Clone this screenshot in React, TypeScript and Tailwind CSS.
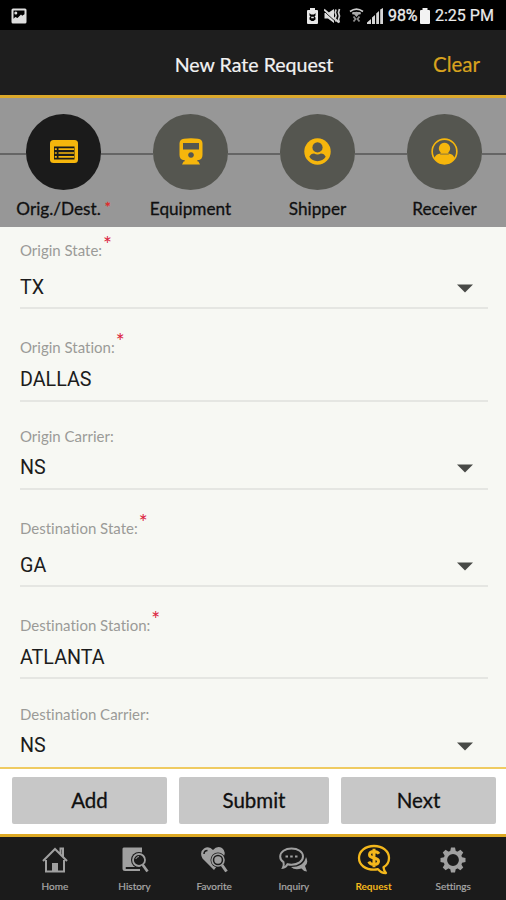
import React from "react";

const LATO = "font-['Lato','Noto_Sans',sans-serif] [font-variant-ligatures:none]";
const ROBOTO = "font-['Roboto','Noto_Sans',sans-serif]";

function StatusBar() {
  return (
    <div className={`flex h-[30px] shrink-0 items-center bg-black pl-[11px] pr-[11px] pt-[1px] text-[#ececec] ${ROBOTO}`}>
      <svg width="16" height="16" viewBox="0 0 16 16">
        <path fillRule="evenodd" fill="#dedede" d="M2 .5h12A1.5 1.5 0 0 1 15.500 2v12a1.500 1.500 0 0 1-1.500 1.500H2A1.500 1.500 0 0 1 .5 14V2A1.500 1.500 0 0 1 2 .5ZM2.500 2.500v8.300l1.800-1.800 2.200 1 3.500-3.500 1.200 1.300 2.300-1.600V2.500Z" />
        <circle cx="4.800" cy="5" r="1.500" fill="#dedede" />
      </svg>
      <div className="ml-auto flex items-center">
        <svg width="11" height="16" viewBox="0 0 11 16">
          <path fillRule="evenodd" fill="#e8e8e8" d="M3 0h5v2h2a1 1 0 0 1 1 1v12a1 1 0 0 1-1 1H1a1 1 0 0 1-1-1V3a1 1 0 0 1 1-1h2ZM2.500 5v2.500l1 1-1 1v2L4.500 13h2l2-1.500v-2l-1-1 1-1V5L7 6.500H4Z" />
          <path d="M4.200 9.500h2.600" stroke="#e8e8e8" strokeWidth="1.500" />
        </svg>
        <svg className="ml-[6px]" width="17" height="16" viewBox="0 0 17 16">
          <path fill="#dedede" d="M.500 5h3.500L10 1v14l-6-4.500H.500Z" />
          <path d="M0 3l14 13" stroke="#000" strokeWidth="1" />
          <path d="M0 1.500l15 13" stroke="#dedede" strokeWidth="1.800" />
          <path d="M12 1.500l-.8 3 1 3-1 3 .8 3M15.500 1l-1 3.500 1 3.500-1 3.500.8 3" stroke="#cfcfcf" strokeWidth="1.700" fill="none" />
        </svg>
        <svg className="ml-[8px]" width="15" height="16" viewBox="0 0 15 16">
          <path d="M1 3.500Q7.500-1.300 14 3.500M3.500 6Q7.500 3 11.500 6" stroke="#cacaca" strokeWidth="1.600" fill="none" />
          <path d="M3 4h9L7.500 9Z" fill="#aaa" />
          <path d="M4.500 8.500l2 2.500-2 2.500M10.500 8.500l-2 2.500 2 2.500" stroke="#8c8c8c" strokeWidth="1.800" fill="none" />
        </svg>
        <svg className="ml-[3px]" width="17" height="16" viewBox="0 0 17 16">
          <path d="M0 16v-1.500L4 11v5ZM5 16V9.500L8 7v9ZM9.200 16V5.500L12 3v13ZM13.200 16V1.500L16 0v16Z" fill="#d6d6d6" />
        </svg>
        <span className="ml-[4px] w-[32px] whitespace-nowrap text-[16px] leading-[20px] tracking-[-0.1px] [-webkit-text-stroke:0.3px]">98%</span>
        <svg width="10" height="16" viewBox="0 0 10 16">
          <path d="M2.500 0h5v2H9a1 1 0 0 1 1 1v12a1 1 0 0 1-1 1H1a1 1 0 0 1-1-1V3a1 1 0 0 1 1-1h1.500Z" fill="#f2f2f2" />
        </svg>
        <span className="ml-[5px] w-[60px] whitespace-nowrap text-[16px] leading-[20px] [-webkit-text-stroke:0.2px]">2:25 PM</span>
      </div>
    </div>
  );
}

function OriginIcon() {
  return (
    <svg width="28" height="23" viewBox="0 0 28 23">
      <rect width="28" height="23" rx="3.500" fill="#f6b60c" />
      <path d="M4 6.500h20.500v13H4Z" fill="#1b1b1b" />
      <path d="M8.500 9.200H24M8.500 13H24M8.500 16.800H24" stroke="#f6b60c" strokeWidth="1.700" />
      <path d="M4.800 9.200h2M4.800 13h2M4.800 16.800h2" stroke="#f6b60c" strokeWidth="1.700" />
    </svg>
  );
}

function TrainIcon() {
  return (
    <svg width="24" height="27" viewBox="0 0 24 27">
      <path fillRule="evenodd" fill="#f6b60c" d="M5 .8Q12-.5 19 .8 23.500 1.600 23.500 5.500V17q0 4.800-4.800 5.300L21 26.500H3l2.300-4.200Q.5 21.800.5 17V5.500Q.5 1.600 5 .8ZM4 5v6.500h16V5ZM12 14.200a2.800 2.800 0 1 0 .01 0Z" />
      <path d="M2 22.800h4M18 22.800h4" stroke="#555650" strokeWidth=".8" />
    </svg>
  );
}

function ShipperIcon() {
  return (
    <svg width="27" height="27" viewBox="0 0 28 28">
      <circle cx="14" cy="14" r="13.700" fill="#f6b60c" />
      <circle cx="14" cy="9.800" r="5.300" fill="#555650" />
      <path d="M5.500 19.500Q7 16 10.500 16q3.500 2 7 0 3.500 0 5 3.500Q19.500 24 14 24t-8.500-4.500Z" fill="#555650" />
    </svg>
  );
}

function ReceiverIcon() {
  return (
    <svg width="27" height="27" viewBox="0 0 28 28">
      <circle cx="14" cy="14" r="12.800" fill="none" stroke="#f6b60c" strokeWidth="1.700" />
      <path d="M14 4.800a6 6 0 0 1 4 10.300v1.100q5 .3 6.500 4.800-3.500 6-10.500 6T3.500 21q1.500-4.500 6.500-4.800v-1.100A6 6 0 0 1 14 4.800Z" fill="#f6b60c" />
      <path d="M9.500 16.700h9" stroke="#555650" strokeWidth=".7" />
    </svg>
  );
}

const steps = [
  { label: "Orig./Dest.", icon: <OriginIcon />, active: true },
  { label: "Equipment", icon: <TrainIcon />, active: false },
  { label: "Shipper", icon: <ShipperIcon />, active: false },
  { label: "Receiver", icon: <ReceiverIcon />, active: false },
];

function Stepper() {
  return (
    <div className="flex h-[129px] w-[508px] shrink-0 bg-[#979797]">
      {steps.map((s) => (
        <div key={s.label} className="flex w-[127px] shrink-0 flex-col pt-[15px]">
          <div className="flex h-[77px] items-center">
            <div className="mt-[5px] h-[2px] flex-1 bg-[#656565]" />
            <div className={`flex h-[76px] w-[75px] items-center justify-center rounded-full ${s.active ? "bg-[#1b1b1b]" : "bg-[#555650]"}`}>
              {s.icon}
            </div>
            <div className="mt-[5px] h-[2px] flex-1 bg-[#656565]" />
          </div>
          <div className="mt-[8px] flex justify-center whitespace-nowrap text-[17.200px] leading-[22px] text-[#101010] [-webkit-text-stroke:0.3px]">
            {s.label}
            {s.active && <span className="ml-[4px] text-[14px] leading-[18px] text-[#e02a2a]">*</span>}
          </div>
        </div>
      ))}
    </div>
  );
}

const fields = [
  { label: "Origin State:", value: "TX", required: true, select: true, box: "h-[82px] pt-[13px] pb-[7px]" },
  { label: "Origin Station:", value: "DALLAS", required: true, select: false, box: "h-[93px] pt-[28px] pb-[8px]" },
  { label: "Origin Carrier:", value: "NS", required: false, select: true, box: "h-[88px] pt-[24px] pb-[8px]" },
  { label: "Destination State:", value: "GA", required: true, select: true, box: "h-[97px] pt-[28px] pb-[7px]" },
  { label: "Destination Station:", value: "ATLANTA", required: true, select: false, box: "h-[92px] pt-[28px] pb-[7px]" },
  { label: "Destination Carrier:", value: "NS", required: false, select: true, box: "h-[88px] pt-[25px] pb-[9px]" },
];

function Form() {
  return (
    <div className="flex h-[540px] shrink-0 flex-col bg-[#f7f8f3] pl-[20px] pr-[18px]">
      {fields.map((f, i) => (
        <div key={f.label} className={`flex shrink-0 flex-col justify-between ${f.box} ${i < 5 ? "border-b-2 border-[#e5e6e2]" : ""}`}>
          <div className="flex h-[20px] text-[15px] leading-[20px] text-[#9b9b98]">
            {f.label}
            {f.required && <span className="-mt-[6px] ml-[1px] text-[21px] leading-[20px] text-[#dc2440]">*</span>}
          </div>
          <div className={`flex h-[24px] items-center justify-between pr-[15px] text-[19.700px] leading-[24px] text-[#1c1c1c] ${ROBOTO}`}>
            {f.value}
            {f.select && (
              <svg width="16" height="9" viewBox="0 0 16 9">
                <path d="M0 .5h16L8 8.500Z" fill="#484a46" />
              </svg>
            )}
          </div>
        </div>
      ))}
    </div>
  );
}

function Actions() {
  return (
    <div className="flex h-[70px] shrink-0 items-start gap-[12px] border-b-[3px] border-t-2 border-b-[#dda924] border-t-[#efcb61] bg-white pl-[12px] pr-[9px] pt-[8px] text-[20.500px] text-[#101010] [-webkit-text-stroke:0.3px]">
      <button className="h-[47px] w-[155px] rounded-[2px] bg-[#c7c7c7]">Add</button>
      <button className="h-[47px] w-[150px] rounded-[2px] bg-[#c7c7c7]">Submit</button>
      <button className="h-[47px] w-[155px] rounded-[2px] bg-[#c7c7c7]">Next</button>
    </div>
  );
}

const GREY = "#a0a0a0";

const HomeIcon = () => (
  <svg width="26" height="28" viewBox="0 0 26 28">
    <path d="M1 15L13 3l12 12M18.500 8V2.500h2.500v8" fill="none" stroke={GREY} strokeWidth="2" />
    <path d="M4 14v11.500h18V14" fill="none" stroke={GREY} strokeWidth="2" />
    <path d="M10 25.500V17h6v8.500Z" fill={GREY} />
  </svg>
);

const HistoryIcon = () => (
  <svg width="28" height="28" viewBox="0 0 28 28">
    <path fill={GREY} d="M2.500 1.500H21V21H5q-1 1 0 2h14v2H4q-2.500 0-2.500-2.500v-20Z" />
    <circle cx="18" cy="14" r="8" fill="#1b1b1b" />
    <circle cx="18" cy="14" r="6" fill="none" stroke={GREY} strokeWidth="1.800" />
    <path d="M14.800 13q.8-2.500 3.200-2.500" fill="none" stroke={GREY} strokeWidth="1" />
    <path d="M21.500 19l4.500 6.500" stroke="#1b1b1b" strokeWidth="5" />
    <path d="M21.500 18.500l5 7" stroke={GREY} strokeWidth="2.700" />
  </svg>
);

const FavoriteIcon = () => (
  <svg width="28" height="28" viewBox="0 0 28 28">
    <path fill={GREY} d="M14 24L2.500 12.500Q-1 6 4 2.500 9-.5 13 4q4-4.500 9-2 5 4 1 10Z" />
    <path d="M4 8q0-3.500 3.500-3.500" fill="none" stroke="#1b1b1b" strokeWidth="1.500" />
    <circle cx="18" cy="14" r="7.500" fill="#1b1b1b" />
    <circle cx="18" cy="14" r="6" fill="none" stroke={GREY} strokeWidth="1.600" />
    <circle cx="18" cy="14" r="3.700" fill={GREY} />
    <path d="M22 19l4.500 6.500" stroke={GREY} strokeWidth="3" />
  </svg>
);

const InquiryIcon = () => (
  <svg width="29" height="28" viewBox="0 0 29 28">
    <path fill={GREY} d="M27 11q3 6-1 9l2 5.500q-4-.5-5.500-3-7 2-10.500-1.500 13 0 15-10Z" />
    <path fill="#1b1b1b" stroke={GREY} strokeWidth="2" d="M12.500 2.500c6.500 0 11.500 3.300 11.500 8s-5 8.200-11.500 8.200q-2 0-4-.5-1.500 3-4.500 3.500 1.300-2.500.5-5.500-3.300-2-3.300-5.700c0-4.700 5-8 11.300-8Z" />
    <path d="M6.500 10.500h2.500M11.200 10.500h2.500M16 10.500h2.500" stroke={GREY} strokeWidth="2.200" />
  </svg>
);

const RequestIcon = () => (
  <svg width="34" height="32" viewBox="0 0 34 32">
    <path fill="none" stroke="#f4b81c" strokeWidth="2.300" strokeLinejoin="round" d="M17 2C25.500 2 32 7 32 14q0 6-5.500 9.300.3 3.200 2.500 5.700-4.500.3-8-3.800Q19 25.700 17 25.700C8.500 25.700 2 21 2 14S8.500 2 17 2Z" />
    <path d="M22 9.800Q20.500 7.500 17 7.500q-4.500 0-4.500 3.200 0 2.500 4.500 3.300t4.500 3.300q0 3.200-4.500 3.200-4 0-5.200-2.800M17 4.800v18.500" fill="none" stroke="#f4b81c" strokeWidth="3" />
  </svg>
);

const gearTeeth = [0, 45, 90, 135, 180, 225, 270, 315];

const SettingsIcon = () => (
  <svg width="28" height="28" viewBox="0 0 28 28">
    {gearTeeth.map((a) => (
      <path key={a} d="M11 6l1-4.500h4l1 4.500Z" fill={GREY} transform={`rotate(${a} 14 14)`} />
    ))}
    <circle cx="14" cy="14" r="7.700" fill="none" stroke={GREY} strokeWidth="3.600" />
  </svg>
);

const tabs = [
  { label: "Home", icon: <HomeIcon /> },
  { label: "History", icon: <HistoryIcon /> },
  { label: "Favorite", icon: <FavoriteIcon /> },
  { label: "Inquiry", icon: <InquiryIcon /> },
  { label: "Request", icon: <RequestIcon />, active: true },
  { label: "Settings", icon: <SettingsIcon /> },
];

function TabBar() {
  return (
    <nav className="flex h-[63px] shrink-0 bg-[#1b1b1b] pl-[15px] pr-[13px]">
      {tabs.map((t) => (
        <div key={t.label} className="flex flex-1 flex-col items-center pt-[6px]">
          <div className="flex h-[33px] items-center">{t.icon}</div>
          <span className={`mt-[4px] text-[10px] leading-[12px] ${t.active ? "font-bold text-[#f4b81c]" : "text-[#a8a8a8] [-webkit-text-stroke:0.2px]"}`}>{t.label}</span>
        </div>
      ))}
    </nav>
  );
}

export default function App() {
  return (
    <div className={`flex h-[900px] w-[506px] flex-col overflow-hidden bg-black ${LATO}`}>
      <StatusBar />
      <header className="grid h-[68px] shrink-0 grid-cols-[1fr_auto_1fr] items-center border-b-[3px] border-[#dca92b] bg-[#1e1e1e] pl-[28px] pr-[26px] pt-[3px]">
        <span />
        <h1 className="pt-[2px] text-[19.600px] leading-[26px] text-[#f2f2f2] [-webkit-text-stroke:0.2px]">New Rate Request</h1>
        <span className="text-right text-[20.500px] leading-[26px] text-[#d9a31e] [-webkit-text-stroke:0.2px]">Clear</span>
      </header>
      <Stepper />
      <Form />
      <Actions />
      <TabBar />
    </div>
  );
}
